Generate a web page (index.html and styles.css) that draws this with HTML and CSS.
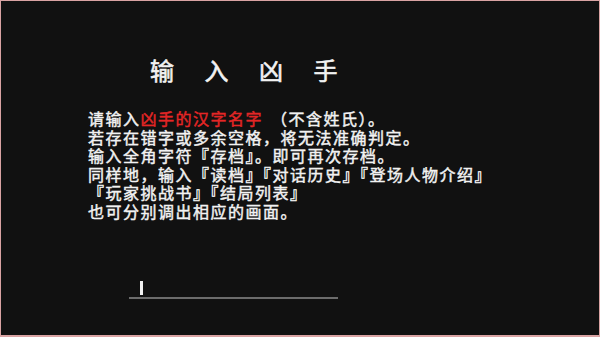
FILE: index.html
```html
<!DOCTYPE html>
<html lang="zh-CN">
<head>
    <meta charset="UTF-8">
    <meta name="viewport" content="width=device-width, initial-scale=1.0">
    <title>输入凶手</title>
    <link rel="stylesheet" href="styles.css">
</head>
<body>
    <div class="screen">
        <div class="title">输入凶手</div>

        <div class="message">
            <div class="line">请输入<span class="hl">凶手的汉字名字</span><span class="note">（不含姓氏）。</span></div>
            <div class="line">若存在错字或多余空格，将无法准确判定。</div>
            <div class="line">输入全角字符『存档』。即可再次存档。</div>
            <div class="line">同样地，输入『读档』『对话历史』『登场人物介绍』</div>
            <div class="line">『玩家挑战书』『结局列表』</div>
            <div class="line">也可分别调出相应的画面。</div>
        </div>

        <div class="entry">
            <div class="cursor"></div>
        </div>
    </div>
</body>
</html>
```

FILE: styles.css
```css
body {
    margin: 0;
    padding: 0;
    background-color: #111111;
    font-family: "Liberation Sans", "Noto Sans CJK SC", sans-serif;
    color: #f2f2f2;
}

.screen {
    width: 600px;
    height: 337px;
    box-sizing: border-box;
    border: 1px solid #d9a3a3;
    border-bottom-width: 2px;
    background-color: #111111;
    padding-top: 56px;
    overflow: hidden;
}

.title {
    margin-left: 149px;
    font-size: 24px;
    line-height: 30px;
    letter-spacing: 30.5px;
    white-space: nowrap;
    -webkit-text-stroke: 0.6px #f2f2f2;
}

.message {
    margin-top: 24px;
    padding-left: 87px;
    font-size: 16px;
    line-height: 18.6px;
    letter-spacing: 1.5px; /* 字间距稍宽 */
    white-space: nowrap;
    -webkit-text-stroke: 0.45px #f2f2f2;
}

.hl {
    color: #e42626;
    -webkit-text-stroke-color: #e42626;
}

.note {
    margin-left: 8px;
}

.entry {
    margin-top: 58px;
    margin-left: 128px;
    width: 209px;
    padding: 0 0 2px 11px;
    box-sizing: border-box;
    border-bottom: 2px solid #6c6c6c;
}

.cursor {
    width: 3px;
    height: 14px;
    background-color: #f0f0f0;
}
```
